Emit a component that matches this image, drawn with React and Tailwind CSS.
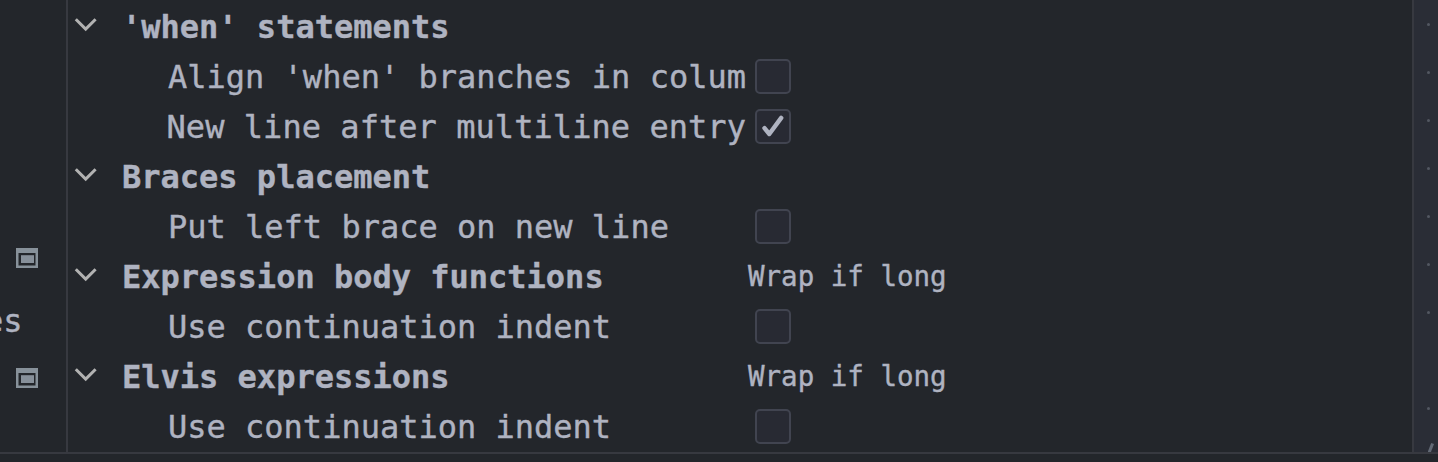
const rows = [
  { group: true, label: "'when' statements" },
  { label: "Align 'when' branches in colum", control: 'off' },
  { label: 'New line after multiline entry', control: 'on', wide: true },
  { group: true, label: 'Braces placement' },
  { label: 'Put left brace on new line', control: 'off' },
  { group: true, label: 'Expression body functions', control: 'wrap' },
  { label: 'Use continuation indent', control: 'off' },
  { group: true, label: 'Elvis expressions', control: 'wrap' },
  { label: 'Use continuation indent', control: 'off' },
];

const dots = [true, true, true, true, true, true, true, false, true];

function Chevron() {
  return (
    <svg className="mb-1.5 h-4 w-6 shrink-0" viewBox="0 0 24 16" fill="none" stroke="#b2b2b2" strokeWidth="3">
      <path d="M1.8 3.2 11.7 13.1 21.6 3.2" />
    </svg>
  );
}

function Checkbox({ checked }) {
  return (
    <span
      role="checkbox"
      aria-checked={checked}
      className="mb-px ml-[7px] flex h-[35px] w-9 items-center justify-center rounded-[5px] border-2 border-[#414450] bg-[#282a33]"
    >
      {checked && (
        <svg className="h-[31px] w-8 shrink-0" viewBox="0 0 32 31" fill="none" stroke="#afb3c1" strokeWidth="4.4" strokeLinecap="round" strokeLinejoin="round">
          <path d="M7.5 17.1 12.3 23 24.2 6.9" />
        </svg>
      )}
    </span>
  );
}

function SchemeIcon() {
  return (
    <svg className="block h-5 w-[22px]" viewBox="0 0 22 20">
      <path fill="#87919a" fillRule="evenodd" d="M0 0H22V20H0ZM2.5 5V17.5H19.5V5Z" />
      <path fill="#87909a" d="M5 7.2H18V15H5Z" />
    </svg>
  );
}

function Row({ group, label, control, wide }) {
  return (
    <div className="flex h-[50px] items-center">
      <div className={group ? 'flex w-[680px] items-center pl-1.5 font-bold' : 'flex w-[680px] items-center pl-[100px]'}>
        {group && <Chevron />}
        <span className={group ? 'pl-6' : wide ? '-ml-[1.5px] tracking-[0.05px]' : ''}>{label}</span>
      </div>
      {control === 'wrap' && <span className="pb-0.5 text-[27.5px]">Wrap if long</span>}
      {(control === 'on' || control === 'off') && <Checkbox checked={control === 'on'} />}
    </div>
  );
}

export default function App() {
  return (
    <div className="flex h-[462px] w-[1438px] flex-col overflow-hidden bg-[#23262b] font-['DejaVu_Sans_Mono',monospace] text-[32px] leading-[50px] whitespace-pre text-[#afb3c1] [-webkit-text-stroke:0.4px]">
      <div className="flex h-[454px] shrink-0 overflow-hidden border-b-2 border-[#373940]">
        <div className="flex w-[66px] flex-col overflow-hidden pt-[248px]">
          <div className="pl-4"><SchemeIcon /></div>
          <div className="-ml-4 flex h-[100px] items-center pt-[5px]">es</div>
          <div className="pl-4"><SchemeIcon /></div>
        </div>
        <div className="w-[1348px] border-x-2 border-[#373940] pt-0.5">
          {rows.map((row, i) => <Row key={i} {...row} />)}
        </div>
        <div className="flex flex-1 flex-col overflow-hidden bg-[#2a2d36]">
          {dots.map((visible, i) => (
            <div key={i} className="flex h-12 shrink-0 items-center pl-[13px]">
              {visible && <span className="size-[3px] rounded-full bg-[#535761]" />}
            </div>
          ))}
          <svg className="ml-3.5 mt-2.5 h-3 w-2 shrink-0" viewBox="0 0 8 12" fill="none" stroke="#626975" strokeWidth="3">
            <path d="M4.6 1.5 0.6 12" />
          </svg>
        </div>
      </div>
    </div>
  );
}
